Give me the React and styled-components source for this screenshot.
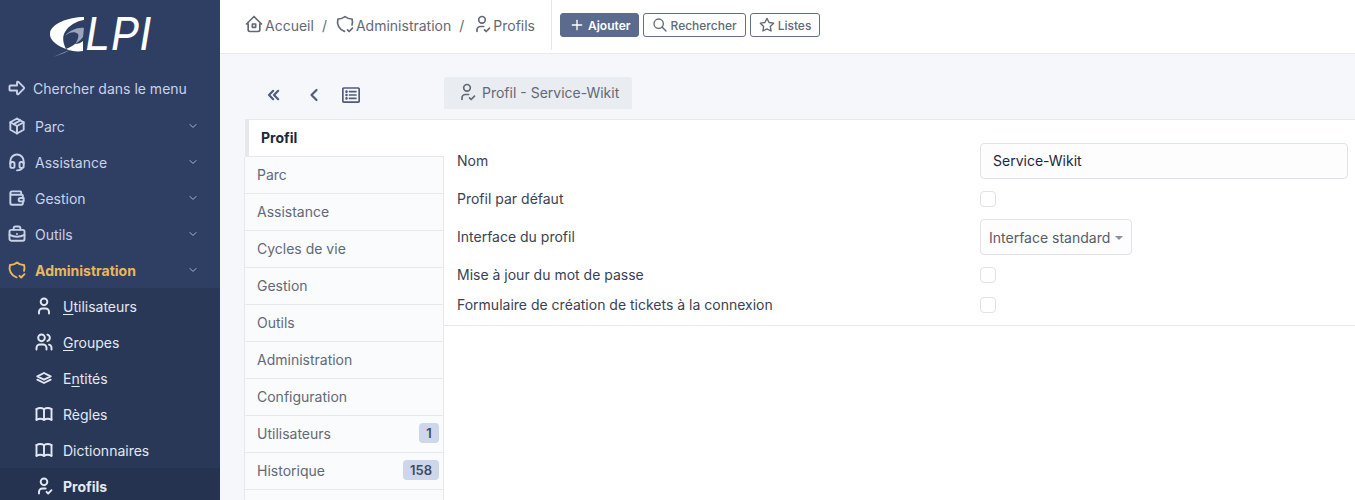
import React from 'react';
import styled, { createGlobalStyle } from 'styled-components';
import {
  TbArrowBigRight, TbPackage, TbHeadset, TbWallet, TbBriefcase, TbShieldCheck,
  TbUser, TbUsers, TbStack, TbBook, TbUserCheck, TbChevronDown, TbHome2,
  TbPlus, TbSearch, TbStar, TbChevronsLeft, TbChevronLeft,
} from 'react-icons/tb';
import { FaRegListAlt } from 'react-icons/fa';

const GlobalStyle = createGlobalStyle`
  html, body { margin: 0; padding: 0; height: 100%; overflow: hidden; }
  body { font-family: Inter, "Liberation Sans", sans-serif; font-size: 14px; background: #f5f7fb; color: #1d273b; }
`;

const App = () => {
  const topMenu = [
    { label: 'Parc', icon: <TbPackage /> },
    { label: 'Assistance', icon: <TbHeadset /> },
    { label: 'Gestion', icon: <TbWallet /> },
    { label: 'Outils', icon: <TbBriefcase /> },
  ];
  const subMenu = [
    { pre: '', key: 'U', post: 'tilisateurs', icon: <TbUser /> },
    { pre: '', key: 'G', post: 'roupes', icon: <TbUsers /> },
    { pre: 'E', key: 'n', post: 'tités', icon: <TbStack /> },
    { pre: 'Règles', key: '', post: '', icon: <TbBook /> },
    { pre: 'Dictionnaires', key: '', post: '', icon: <TbBook /> },
  ];
  const tabs = ['Parc', 'Assistance', 'Cycles de vie', 'Gestion', 'Outils', 'Administration', 'Configuration'];

  return <>
    <GlobalStyle />
    <Page>
      <Sidebar>
        <LogoWrapper>
          <svg width="35" height="44" viewBox="0 0 35 44">
            <path d="M34 2 C18 2 1 9 0 18 C-1 25 7 31 16 34 C13 28 12 22 15 17 C19 10 27 6 34 5 Z" fill="#fff" />
            <path d="M15 21 C20 15 28 12 34 13 L33 22 C31 25 28 27 25 29 C28 25 29 21 28 19 C25 16 19 17 15 21 Z" fill="#9aa5bb" />
            <path d="M16 34 C20 32 23 31 25 29 C28 29 31 28 33 26 L33 36 C27 37 21 36 16 34 Z" fill="#fff" />
            <path d="M3 42 L22 34 L14 38 Z" fill="#b8c0d0" />
          </svg>
          <LogoText>LPI</LogoText>
        </LogoWrapper>

        <SearchRow>
          <TbArrowBigRight />
          <span>Chercher dans le menu</span>
        </SearchRow>

        {topMenu.map(m => (
          <MenuItem key={m.label}>
            <MenuIcon>{m.icon}</MenuIcon>
            <MenuLabel>{m.label}</MenuLabel>
            <Caret><TbChevronDown /></Caret>
          </MenuItem>
        ))}

        <MenuItem $active>
          <MenuIcon><TbShieldCheck /></MenuIcon>
          <MenuLabel>Administration</MenuLabel>
          <Caret><TbChevronDown /></Caret>
        </MenuItem>

        <SubMenu>
          {subMenu.map(s => (
            <SubItem key={s.pre + s.key + s.post}>
              <SubIcon>{s.icon}</SubIcon>
              <span>{s.pre}<u>{s.key}</u>{s.post}</span>
            </SubItem>
          ))}
          <SubItem $current>
            <SubIcon><TbUserCheck /></SubIcon>
            <span>Profils</span>
          </SubItem>
        </SubMenu>
      </Sidebar>

      <Main>
        <Header>
          <Breadcrumb>
            <Crumb><TbHome2 />Accueil</Crumb>
            <Slash>/</Slash>
            <Crumb><TbShieldCheck />Administration</Crumb>
            <Slash>/</Slash>
            <Crumb><TbUserCheck />Profils</Crumb>
          </Breadcrumb>
          <Actions>
            <PrimaryButton><TbPlus />Ajouter</PrimaryButton>
            <OutlineButton><TbSearch />Rechercher</OutlineButton>
            <OutlineButton><TbStar />Listes</OutlineButton>
          </Actions>
        </Header>

        <Content>
          <NavBar>
            <NavIcons>
              <TbChevronsLeft />
              <TbChevronLeft />
              <FaRegListAlt />
            </NavIcons>
            <TitleTab><TbUserCheck />Profil - Service-Wikit</TitleTab>
          </NavBar>

          <Panel>
            <Tabs>
              <ActiveTab>Profil</ActiveTab>
              {tabs.map(t => <Tab key={t}>{t}</Tab>)}
              <Tab>Utilisateurs<Count>1</Count></Tab>
              <Tab>Historique<Count>158</Count></Tab>
              <Tab />
            </Tabs>

            <FormPanel>
              <Form>
                <FormRow $h={36}>
                  <Label>Nom</Label>
                  <NameInput>Service-Wikit</NameInput>
                </FormRow>
                <FormRow $h={40}>
                  <Label>Profil par défaut</Label>
                  <Check />
                </FormRow>
                <FormRow $h={36}>
                  <Label>Interface du profil</Label>
                  <Select>Interface standard<SelectArrow /></Select>
                </FormRow>
                <FormRow $h={40}>
                  <Label>Mise à jour du mot de passe</Label>
                  <Check />
                </FormRow>
                <FormRow $h={20}>
                  <Label>Formulaire de création de tickets à la connexion</Label>
                  <Check />
                </FormRow>
              </Form>
            </FormPanel>
          </Panel>
        </Content>
      </Main>
    </Page>
  </>
}

export default App;

const Page = styled.div`
  display: flex;
  width: 1355px;
  height: 500px;
  overflow: hidden;
`;

const Sidebar = styled.aside`
  display: flex;
  flex-direction: column;
  flex: none;

  width: 220px;
  height: 500px;

  background: #2f3f64;
  color: #c9d2e6;
`;

const LogoWrapper = styled.div`
  display: flex;
  align-items: flex-start;
  flex: none;

  height: 70px;
  padding: 15px 0 0 50px;
  box-sizing: border-box;
`;

const LogoText = styled.span`
  margin: -1px 0 0 0;

  color: #fff;
  font-size: 45px;
  font-style: italic;
  font-weight: 400;
  line-height: 40px;
`;

const SearchRow = styled.div`
  display: flex;
  align-items: center;
  flex: none;
  gap: 6px;

  height: 36px;
  margin-bottom: 2px;
  padding-left: 7px;

  svg { width: 20px; height: 20px; stroke-width: 2.3; }
`;

const MenuItem = styled.div`
  display: flex;
  align-items: center;
  flex: none;

  height: 36px;
  padding-left: 7px;
  box-sizing: border-box;

  color: ${p => p.$active ? '#ecb65a' : '#c9d2e6'};
  font-weight: ${p => p.$active ? 700 : 400};
`;

const MenuIcon = styled.span`
  display: flex;
  width: 28px;

  svg { width: 20px; height: 20px; stroke-width: 2.3; }
`;

const MenuLabel = styled.span`
  flex: 1;
`;

const Caret = styled.span`
  display: flex;
  margin-right: 21px;
  color: #aab4ca;

  svg { width: 12px; height: 12px; }
`;

const SubMenu = styled.div`
  display: flex;
  flex-direction: column;
  flex: none;
  background: #2a3858;
`;

const SubItem = styled.div`
  display: flex;
  align-items: center;
  flex: none;

  height: 36px;
  padding-left: 34px;

  background: ${p => p.$current ? '#253250' : 'transparent'};
  color: #e3e8f2;
  font-weight: ${p => p.$current ? 700 : 400};

  u { text-underline-offset: 2px; }
`;

const SubIcon = styled.span`
  display: flex;
  width: 29px;

  svg { width: 20px; height: 20px; stroke-width: 2.3; }
`;

const Main = styled.main`
  display: flex;
  flex-direction: column;
  flex: 1;
  min-width: 0;
`;

const Header = styled.header`
  display: flex;
  align-items: flex-start;
  flex: none;

  height: 53px;
  background: #fff;
  border-bottom: 1px solid #e8ebf0;
`;

const Breadcrumb = styled.nav`
  display: flex;
  align-items: center;

  width: 332px;
  height: 50px;
  padding-left: 24px;
  box-sizing: border-box;

  border-right: 1px solid #e6e8ec;
  color: #626976;
`;

const Crumb = styled.span`
  display: flex;
  align-items: center;
  gap: 1px;

  svg { width: 20px; height: 20px; margin-top: -3px; }
`;

const Slash = styled.span`
  margin: 0 8px;
`;

const Actions = styled.div`
  display: flex;
  gap: 4px;
  margin: 13px 0 0 8px;
`;

const PrimaryButton = styled.button`
  display: flex;
  align-items: center;
  gap: 3px;

  height: 24px;
  padding: 0 7px 0 8px;

  background: #5b6b8e;
  border: 1px solid #5b6b8e;
  border-radius: 3px;
  color: #fff;
  font: 600 12px Inter, sans-serif;

  svg { width: 16px; height: 16px; }
`;

const OutlineButton = styled(PrimaryButton)`
  padding: 0 8px;

  background: #fff;
  border-color: #626f8c;
  color: #626976;
  font-weight: 500;
`;

const Content = styled.div`
  display: flex;
  flex-direction: column;
  flex: 1;
  padding-left: 24px;
`;

const NavBar = styled.div`
  display: flex;
  align-items: flex-start;
  flex: none;

  height: 65px;
  padding-top: 23px;
  box-sizing: border-box;
`;

const NavIcons = styled.div`
  display: flex;
  align-items: center;
  gap: 20px;

  width: 200px;
  height: 36px;
  padding-left: 20px;
  box-sizing: border-box;
  color: #4f5d7c;

  svg { width: 20px; height: 20px; stroke-width: 2.6; }

  svg:last-child { width: 18px; height: 18px; margin-left: -2px; stroke-width: 0; }
`;

const TitleTab = styled.div`
  display: flex;
  align-items: center;
  gap: 5px;

  width: 188px;
  height: 32px;
  padding: 0 0 2px 13px;
  box-sizing: border-box;

  background: #e9ecf1;
  border-radius: 3px 3px 0 0;
  color: #626976;

  svg { width: 20px; height: 20px; }
`;

const Panel = styled.div`
  display: flex;
  flex: 1;
`;

const Tabs = styled.div`
  display: flex;
  flex-direction: column;
  flex: none;
  width: 200px;
`;

const Tab = styled.div`
  display: flex;
  align-items: center;
  justify-content: space-between;
  flex: none;

  height: 37px;
  padding: 0 4px 2px 12px;
  box-sizing: border-box;

  background: #fafbfd;
  border-left: 1px solid #e6e8ec;
  border-right: 1px solid #e6e8ec;
  border-bottom: 1px solid #e6e8ec;
  color: #626976;
`;

const ActiveTab = styled.div`
  display: flex;
  align-items: center;
  flex: none;

  height: 38px;
  margin-left: 1px;
  padding: 0 0 1px 12px;
  box-sizing: border-box;

  background: #fff;
  border-top: 1px solid #e6e8ec;
  border-left: 4px solid #e6e8ec;
  border-bottom: 1px solid #e6e8ec;
  font-weight: 700;
`;

const Count = styled.span`
  display: flex;
  align-items: center;
  justify-content: center;

  min-width: 20px;
  height: 20px;
  padding: 0 7px;
  box-sizing: border-box;

  background: #cdd6ea;
  border-radius: 4px;
  color: #3e4a63;
  font-size: 13px;
  font-weight: 600;
`;

const FormPanel = styled.section`
  flex: 1;
  background: #fff;
  border-top: 1px solid #e6e8ec;
`;

const Form = styled.div`
  padding: 23px 7px 10px 13px;
  border-bottom: 1px solid #e6e8ec;
`;

const FormRow = styled.div`
  display: grid;
  grid-template-columns: 523px 1fr;
  align-items: center;
  height: ${p => p.$h}px;
`;

const Label = styled.label`
  margin-bottom: 2px;
  color: #3a4252;
`;

const NameInput = styled.div`
  display: flex;
  align-items: center;

  height: 36px;
  padding: 0 0 2px 12px;
  box-sizing: border-box;

  background: #fdfdfe;
  border: 1px solid #dfe2e7;
  border-radius: 4px;
`;

const Select = styled.div`
  display: flex;
  align-items: center;
  justify-self: start;

  width: 152px;
  height: 36px;
  padding-left: 8px;
  box-sizing: border-box;

  background: #fdfdfe;
  border: 1px solid #dfe2e7;
  border-radius: 4px;
  color: #555c69;
`;

const SelectArrow = styled.span`
  width: 0;
  height: 0;
  margin: 2px 0 0 5px;

  border-left: 4px solid transparent;
  border-right: 4px solid transparent;
  border-top: 4px solid #8b8f97;
`;

const Check = styled.span`
  display: block;
  width: 16px;
  height: 16px;
  box-sizing: border-box;

  background: #fff;
  border: 1px solid #dfe2e7;
  border-radius: 4px;
`;
